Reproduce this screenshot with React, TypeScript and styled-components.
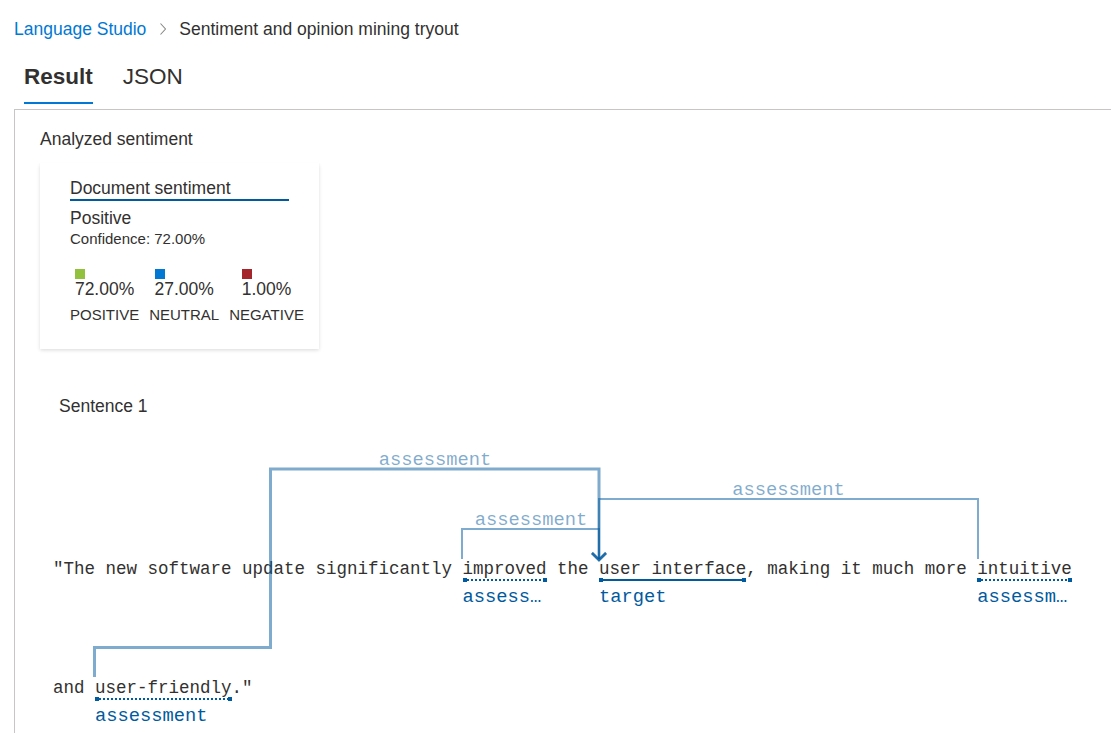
import React from "react";
import styled, { createGlobalStyle } from "styled-components";

const GlobalStyle = createGlobalStyle`
  html, body { margin: 0; padding: 0; background: #ffffff; }
  body {
    font-family: "Liberation Sans", Arial, sans-serif;
    color: #323130;
    overflow: hidden;
  }
`;

const Page = styled.div`
  width: 1111px;
  height: 733px;
  overflow: hidden;
`;

const Breadcrumb = styled.nav`
  display: flex;
  align-items: center;
  padding: 19px 0 0 14px;
  font-size: 17.5px;
  line-height: 20px;
`;

const CrumbLink = styled.span`
  color: #0078d4;
`;

const CrumbCurrent = styled.span`
  color: #323130;
`;

const CrumbSep = styled.svg`
  margin: 0 13px 0 14px;
  width: 6px;
  height: 12px;
`;

const TabBar = styled.div`
  display: flex;
  gap: 30px;
  margin: 25px 0 0 24px;
`;

const Tab = styled.div<{ $active?: boolean }>`
  font-size: 22.5px;
  line-height: 26px;
  font-weight: ${(p) => (p.$active ? 700 : 400)};
  color: #323130;
  padding-bottom: 12px;
  border-bottom: 2px solid ${(p) => (p.$active ? "#0078d4" : "transparent")};
`;

const Panel = styled.section`
  margin: 5px 0 0 14px;
  border-top: 1px solid #c8c6c4;
  border-left: 1px solid #c8c6c4;
  padding: 19px 0 0 25px;
  min-height: 640px;
`;

const SectionTitle = styled.div`
  font-size: 17.5px;
  line-height: 20px;
`;

const Card = styled.div`
  box-sizing: border-box;
  width: 279px;
  margin-top: 14px;
  padding: 15px 30px 25px 30px;
  background: #ffffff;
  box-shadow: 0 1.6px 3.6px 0 rgba(0, 0, 0, 0.132), 0 0.3px 0.9px 0 rgba(0, 0, 0, 0.108);
`;

const CardHeading = styled.div`
  font-size: 17.5px;
  line-height: 20px;
  padding-bottom: 1px;
  border-bottom: 2px solid #005a9e;
`;

const Overall = styled.div`
  margin-top: 7px;
  font-size: 17.5px;
  line-height: 20px;
`;

const Confidence = styled.div`
  margin-top: 2px;
  font-size: 15px;
  line-height: 18px;
`;

const Stats = styled.div`
  display: flex;
  gap: 10px;
  margin-top: 21px;
`;

const Stat = styled.div`
  display: flex;
  flex-direction: column;
  align-items: center;
`;

const StatValue = styled.div`
  display: flex;
  flex-direction: column;
  align-items: flex-start;
  font-size: 17.5px;
  line-height: 20px;
`;

const Swatch = styled.span<{ $color: string }>`
  display: block;
  width: 10px;
  height: 10px;
  background: ${(p) => p.$color};
`;

const StatLabel = styled.div`
  margin-top: 7px;
  font-size: 15px;
  line-height: 18px;
`;

const SentenceTitle = styled.div`
  margin-top: 47px;
  padding-left: 19px;
  font-size: 17.5px;
  line-height: 20px;
`;

const Diagram = styled.div`
  position: relative;
  margin: 14px 0 0 13px;
  font-family: "Liberation Mono", "Courier New", monospace;
`;

const Line = styled.div<{ $gap: number }>`
  display: flex;
  align-items: flex-start;
  padding-top: ${(p) => p.$gap}px;
`;

const Plain = styled.span`
  white-space: pre;
  font-size: 17.5px;
  line-height: 20px;
  color: #323130;
`;

const Token = styled.span`
  display: flex;
  flex-direction: column;
`;

const Word = styled.span`
  white-space: pre;
  font-size: 17.5px;
  line-height: 20px;
  color: #323130;
`;

const Underline = styled.span<{ $dotted?: boolean }>`
  position: relative;
  display: block;
  height: 4px;
  margin-top: -1px;
  background-image: ${(p) =>
    p.$dotted
      ? "repeating-linear-gradient(to right, #005a9e 0 2px, transparent 2px 4px)"
      : "linear-gradient(#005a9e, #005a9e)"};
  background-size: 100% 2px;
  background-position: 0 1px;
  background-repeat: no-repeat;

  &::before,
  &::after {
    content: "";
    position: absolute;
    top: 0;
    width: 4px;
    height: 4px;
    background: #005a9e;
  }
  &::before { left: 0; }
  &::after { right: 0; }
`;

const TagLabel = styled.span`
  width: 0;
  min-width: 100%;
  margin-top: 4px;
  font-size: 18.75px;
  line-height: 22px;
  color: #005a9e;
  white-space: nowrap;
  overflow: hidden;
  text-overflow: ellipsis;
`;

const Arcs = styled.svg`
  position: absolute;
  left: 0;
  top: 0;
  width: 100%;
  height: 100%;
  overflow: visible;
  pointer-events: none;
`;

const ArcText = styled.text`
  font-family: "Liberation Mono", "Courier New", monospace;
  font-size: 18.75px;
  fill: rgba(0, 90, 158, 0.5);
`;

type Seg = { text: string; tag?: string; dotted?: boolean };

const line1: Seg[] = [
  { text: '"The new software update significantly ' },
  { text: "improved", tag: "assessment", dotted: true },
  { text: " the " },
  { text: "user interface", tag: "target" },
  { text: ", making it much more " },
  { text: "intuitive", tag: "assessment", dotted: true },
];

const line2: Seg[] = [
  { text: "and " },
  { text: "user-friendly", tag: "assessment", dotted: true },
  { text: '."' },
];

const renderSegs = (segs: Seg[]) =>
  segs.map((s, i) =>
    s.tag ? (
      <Token key={i}>
        <Word>{s.text}</Word>
        <Underline $dotted={s.dotted} />
        <TagLabel>{s.tag}</TagLabel>
      </Token>
    ) : (
      <Plain key={i}>{s.text}</Plain>
    )
  );

const stroke = "rgba(0, 90, 158, 0.5)";
const arrow = "M592,553 L599,560 L606,553";

const stats = [
  { color: "#92c13e", value: "72.00%", label: "POSITIVE" },
  { color: "#0078d4", value: "27.00%", label: "NEUTRAL" },
  { color: "#a4262c", value: "1.00%", label: "NEGATIVE" },
];

export default function App() {
  return (
    <Page>
      <GlobalStyle />
      <Breadcrumb>
        <CrumbLink>Language Studio</CrumbLink>
        <CrumbSep viewBox="0 0 6 12">
          <path d="M0.5,0.5 L5.5,6 L0.5,11.5" fill="none" stroke="#8a8886" strokeWidth="1.1" />
        </CrumbSep>
        <CrumbCurrent>Sentiment and opinion mining tryout</CrumbCurrent>
      </Breadcrumb>
      <TabBar>
        <Tab $active>Result</Tab>
        <Tab>JSON</Tab>
      </TabBar>
      <Panel>
        <SectionTitle>Analyzed sentiment</SectionTitle>
        <Card>
          <CardHeading>Document sentiment</CardHeading>
          <Overall>Positive</Overall>
          <Confidence>Confidence: 72.00%</Confidence>
          <Stats>
            {stats.map((s) => (
              <Stat key={s.label}>
                <StatValue>
                  <Swatch $color={s.color} />
                  {s.value}
                </StatValue>
                <StatLabel>{s.label}</StatLabel>
              </Stat>
            ))}
          </Stats>
        </Card>
        <SentenceTitle>Sentence 1</SentenceTitle>
        <Diagram>
          <Line $gap={129}>{renderSegs(line1)}</Line>
          <Line $gap={70}>{renderSegs(line2)}</Line>
          <Arcs>
            <g transform="translate(-53,-430)">
              <path d="M94.5,677 V647.5 H270.5 V469 H599 V559" fill="none" stroke={stroke} strokeWidth="3" />
              <path d={arrow} fill="none" stroke={stroke} strokeWidth="2.5" />
              <ArcText x="435" y="465" textAnchor="middle">assessment</ArcText>

              <path d="M978,559 V499 H599 V559" fill="none" stroke={stroke} strokeWidth="2" />
              <path d={arrow} fill="none" stroke={stroke} strokeWidth="2.5" />
              <ArcText x="788.5" y="495" textAnchor="middle">assessment</ArcText>

              <path d="M462,559 V529 H599 V559" fill="none" stroke={stroke} strokeWidth="2" />
              <path d={arrow} fill="none" stroke={stroke} strokeWidth="2.5" />
              <ArcText x="531" y="525" textAnchor="middle">assessment</ArcText>
            </g>
          </Arcs>
        </Diagram>
      </Panel>
    </Page>
  );
}
